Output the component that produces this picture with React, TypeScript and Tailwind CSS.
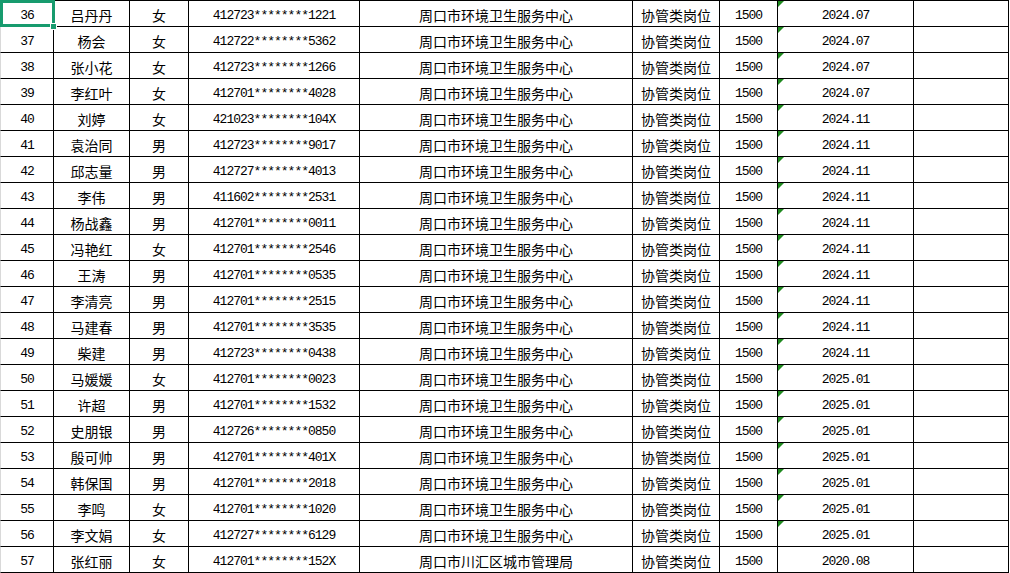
import React from "react";

const rows: [string, string, string, string, string, string][] = [
  ["36", "吕丹丹", "女", "412723********1221", "周口市环境卫生服务中心", "2024.07"],
  ["37", "杨会", "女", "412722********5362", "周口市环境卫生服务中心", "2024.07"],
  ["38", "张小花", "女", "412723********1266", "周口市环境卫生服务中心", "2024.07"],
  ["39", "李红叶", "女", "412701********4028", "周口市环境卫生服务中心", "2024.07"],
  ["40", "刘婷", "女", "421023********104X", "周口市环境卫生服务中心", "2024.11"],
  ["41", "袁治同", "男", "412723********9017", "周口市环境卫生服务中心", "2024.11"],
  ["42", "邱志量", "男", "412727********4013", "周口市环境卫生服务中心", "2024.11"],
  ["43", "李伟", "男", "411602********2531", "周口市环境卫生服务中心", "2024.11"],
  ["44", "杨战鑫", "男", "412701********0011", "周口市环境卫生服务中心", "2024.11"],
  ["45", "冯艳红", "女", "412701********2546", "周口市环境卫生服务中心", "2024.11"],
  ["46", "王涛", "男", "412701********0535", "周口市环境卫生服务中心", "2024.11"],
  ["47", "李清亮", "男", "412701********2515", "周口市环境卫生服务中心", "2024.11"],
  ["48", "马建春", "男", "412701********3535", "周口市环境卫生服务中心", "2024.11"],
  ["49", "柴建", "男", "412723********0438", "周口市环境卫生服务中心", "2024.11"],
  ["50", "马媛媛", "女", "412701********0023", "周口市环境卫生服务中心", "2025.01"],
  ["51", "许超", "男", "412701********1532", "周口市环境卫生服务中心", "2025.01"],
  ["52", "史朋银", "男", "412726********0850", "周口市环境卫生服务中心", "2025.01"],
  ["53", "殷可帅", "男", "412701********401X", "周口市环境卫生服务中心", "2025.01"],
  ["54", "韩保国", "男", "412701********2018", "周口市环境卫生服务中心", "2025.01"],
  ["55", "李鸣", "女", "412701********1020", "周口市环境卫生服务中心", "2025.01"],
  ["56", "李文娟", "女", "412727********6129", "周口市环境卫生服务中心", "2025.01"],
  ["57", "张红丽", "女", "412701********152X", "周口市川汇区城市管理局", "2020.08"],
];

const cell = "relative flex items-center justify-center pt-[4px] border-r border-b border-black whitespace-nowrap overflow-hidden text-black";
const num = "text-[13px] tracking-[-1px] font-['Liberation_Mono','DejaVu_Sans_Mono',monospace]";
const zh = "text-[14px] font-['Noto_Sans_CJK_SC','Noto_Sans',sans-serif]";

export default function App() {
  return (
    <div className="w-[1010px] h-[573px] bg-white overflow-hidden">
      <div className="relative border-t border-black w-[1009px]">
        {rows.map((r, i) => (
          <div key={r[0]} className="flex h-[26px]">
            <div className={`${cell} ${num} w-[54px] border-l border-l-[#d9d9d9]`}>{r[0]}</div>
            <div className={`${cell} ${zh} w-[76px]`}>{r[1]}</div>
            <div className={`${cell} ${zh} w-[59px]`}>{r[2]}</div>
            <div className={`${cell} ${num} w-[171px]`}>{r[3]}</div>
            <div className={`${cell} ${zh} w-[273px]`}>{r[4]}</div>
            <div className={`${cell} ${zh} w-[87px]`}>协管类岗位</div>
            <div className={`${cell} ${num} w-[58px]`}>1500</div>
            <div className={`${cell} ${num} w-[136px]`}>
              {i < rows.length - 1 && (
                <div className="absolute left-0 top-0 w-0 h-0 border-t-[6px] border-r-[6px] border-t-[#1f8a1f] border-r-transparent" />
              )}
              {r[5]}
            </div>
            <div className={`${cell} w-[95px]`} />
          </div>
        ))}
        {/* active cell selection */}
        <div className="absolute z-10 left-0 top-[-1px] w-[55px] h-[3px] bg-[#179b6e]" />
        <div className="absolute z-10 left-0 top-[23px] w-[55px] h-[3px] bg-[#179b6e]" />
        <div className="absolute z-10 left-0 top-[-1px] w-[3px] h-[27px] bg-[#179b6e]" />
        <div className="absolute z-10 left-[52px] top-[-1px] w-[3px] h-[27px] bg-[#179b6e]" />
        <div className="absolute z-20 left-[50px] top-[22px] w-[7px] h-[7px] bg-[#179b6e] border border-white" />
      </div>
    </div>
  );
}
